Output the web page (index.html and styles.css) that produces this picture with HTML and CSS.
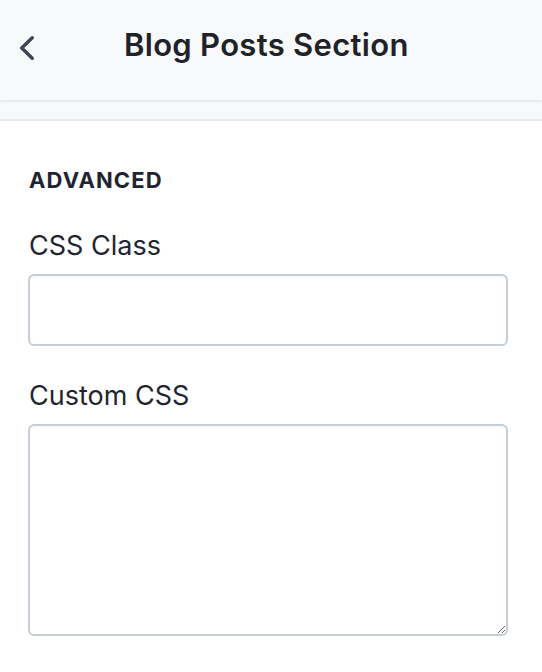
FILE: index.html
```html
<!DOCTYPE html>
<html>
<head>
<meta charset="utf-8">
<link rel="stylesheet" href="styles.css">
</head>
<body>
<header class="header">
  <button class="back" aria-label="Back">
    <svg width="18" height="26" viewBox="0 0 18 26"><path d="M14.25 2.75 L3.75 13 L14.25 23.25" fill="none" stroke="#3c4655" stroke-width="3.5" stroke-linecap="round" stroke-linejoin="round"/></svg>
  </button>
  <h1 class="title">Blog Posts Section</h1>
</header>
<div class="band"></div>
<main class="content">
  <h2 class="section">ADVANCED</h2>
  <label class="field">
    <span class="label">CSS Class</span>
    <input class="input" type="text">
  </label>
  <label class="field">
    <span class="label">Custom CSS</span>
    <textarea class="textarea"></textarea>
  </label>
</main>
</body>
</html>
```
FILE: styles.css
```css
* { box-sizing: border-box; }
html, body { margin: 0; background: #fff; }
body { font-family: Inter, "Noto Sans", sans-serif; color: #1f2530; }
.header {
  height: 100px;
  padding-bottom: 11px;
  background: #f8f9fb;
  display: flex;
  align-items: center;
  position: relative;
  box-shadow: 0 1px 3px rgba(0,0,0,0.12);
  z-index: 1;
}
.back {
  border: 0; background: none; padding: 0;
  margin: 7px 0 0 18px; width: 18px; height: 26px;
  display: flex;
}
.title {
  margin: 0 0 0 88px;
  font-size: 31px;
  line-height: 38px;
  font-weight: 600;
  letter-spacing: 0.3px;
  color: #1f2329;
}
.band {
  height: 21px;
  background: #f8f9fb;
  border-bottom: 2px solid #e6e9ed;
}
.content { padding: 45px 28px 0 28px; }
.section {
  margin: 0 0 35px 1px;
  font-size: 22px;
  line-height: 28px;
  font-weight: 700;
  letter-spacing: 1.1px;
  color: #1f2530;
}
.field { display: flex; flex-direction: column; margin-bottom: 33px; }
.label {
  font-size: 27px;
  line-height: 33px;
  margin-left: 1px;
  margin-bottom: 12px;
  color: #1f2530;
}
.input, .textarea {
  width: 480px;
  border: 2px solid #c3ced8;
  border-radius: 6px;
  background: #fff;
  box-shadow: inset 0 2px 2px rgba(0,0,0,0.03);
  font: inherit;
  outline: none;
}
.input { height: 72px; }
.textarea { height: 212px; display: block; }
```
